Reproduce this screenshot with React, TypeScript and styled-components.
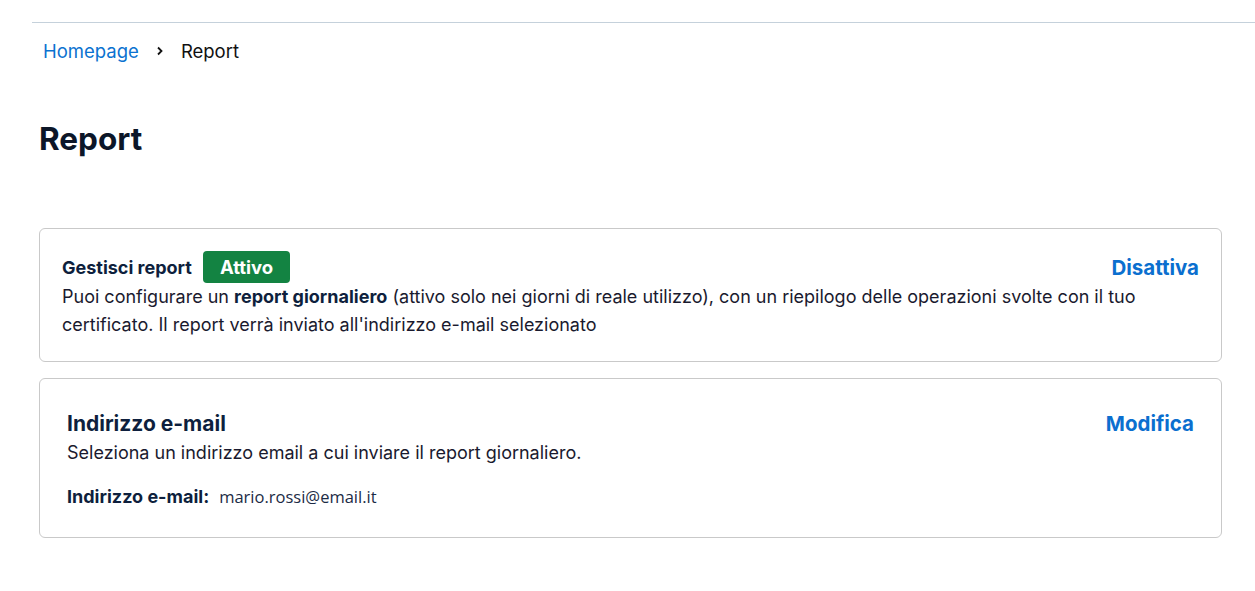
import React from "react";
import styled, { createGlobalStyle } from "styled-components";

const Global = createGlobalStyle`
  html, body { margin: 0; padding: 0; background: #fff; }
  body { font-family: Inter, "Noto Sans", sans-serif; color: #1a1a2e; }
  * { box-sizing: border-box; }
`;

const Page = styled.div`
  width: 1255px;
  padding-top: 22px;
`;

const TopRule = styled.div`
  margin-left: 32px;
  height: 1px;
  background: #c5d1db;
`;

const Main = styled.main`
  padding: 0 33px 0 39px;
`;

const Breadcrumb = styled.nav`
  display: flex;
  align-items: center;
  gap: 14px;
  margin: 16px 0 0 4px;
  font-size: 18.5px;
  line-height: 24px;
`;

const Crumb = styled.a`
  color: #0b72d0;
  text-decoration: none;
`;

const Current = styled.span`
  color: #111;
`;

const Sep = styled.svg`
  width: 12px;
  height: 12px;
  margin: 0 1px;
`;

const Title = styled.h1`
  margin: 56px 0 69px;
  font-size: 31.5px;
  font-weight: 700;
  line-height: 40px;
  color: #0c1628;
`;

const Card = styled.section<{ $pad: string }>`
  border: 1px solid #c9c9c9;
  border-radius: 6px;
  padding: ${(p) => p.$pad};
  margin-bottom: 16px;
`;

const HeadRow = styled.div`
  display: flex;
  align-items: center;
  justify-content: space-between;
`;

const HeadLeft = styled.div`
  display: flex;
  align-items: center;
  gap: 11px;
`;

const CardTitle = styled.h2<{ $size: number }>`
  margin: 0;
  font-size: ${(p) => p.$size}px;
  font-weight: 700;
  color: #0e1f3d;
`;

const Badge = styled.span`
  display: inline-flex;
  align-items: center;
  height: 32px;
  padding: 0 17px;
  border-radius: 4px;
  background: #138342;
  color: #fff;
  font-weight: 700;
  font-size: 18.5px;
`;

const Action = styled.button`
  border: 0;
  background: none;
  padding: 0;
  font-family: inherit;
  font-size: 20.5px;
  font-weight: 700;
  color: #0b6fcf;
  cursor: pointer;
`;

const Text = styled.p<{ $mt?: number }>`
  margin: ${(p) => p.$mt ?? 0}px 0 0;
  font-size: 18px;
  line-height: 28px;
  color: #1a1a2e;
  strong { font-weight: 700; color: #0e1f3d; }
`;

const Field = styled.div`
  display: flex;
  align-items: baseline;
  gap: 10px;
  margin-top: 18px;
`;

const FieldLabel = styled.span`
  font-size: 18px;
  font-weight: 700;
  color: #0e1f3d;
`;

const FieldValue = styled.span`
  font-family: "Open Sans", "Noto Sans", sans-serif;
  font-size: 16.5px;
  color: #1b2b45;
`;

export default function App() {
  return (
    <Page>
      <Global />
      <TopRule />
      <Main>
        <Breadcrumb>
          <Crumb href="#">Homepage</Crumb>
          <Sep viewBox="0 0 12 12">
            <path d="M4 2.5 L7.5 6 L4 9.5" fill="none" stroke="#111" strokeWidth="1.8" />
          </Sep>
          <Current>Report</Current>
        </Breadcrumb>
        <Title>Report</Title>
        <Card $pad="22px 22px 22px 22px">
          <HeadRow>
            <HeadLeft>
              <CardTitle $size={18}>Gestisci report</CardTitle>
              <Badge>Attivo</Badge>
            </HeadLeft>
            <Action>Disattiva</Action>
          </HeadRow>
          <Text>
            Puoi configurare un <strong>report giornaliero</strong> (attivo solo nei giorni di reale
            utilizzo), con un riepilogo delle operazioni svolte con il tuo certificato. Il report verrà
            inviato all'indirizzo e-mail selezionato
          </Text>
        </Card>
        <Card $pad="32px 27px 29px 27px">
          <HeadRow>
            <CardTitle $size={21}>Indirizzo e-mail</CardTitle>
            <Action>Modifica</Action>
          </HeadRow>
          <Text $mt={3}>Seleziona un indirizzo email a cui inviare il report giornaliero.</Text>
          <Field>
            <FieldLabel>Indirizzo e-mail:</FieldLabel>
            <FieldValue>mario.rossi@email.it</FieldValue>
          </Field>
        </Card>
      </Main>
    </Page>
  );
}
